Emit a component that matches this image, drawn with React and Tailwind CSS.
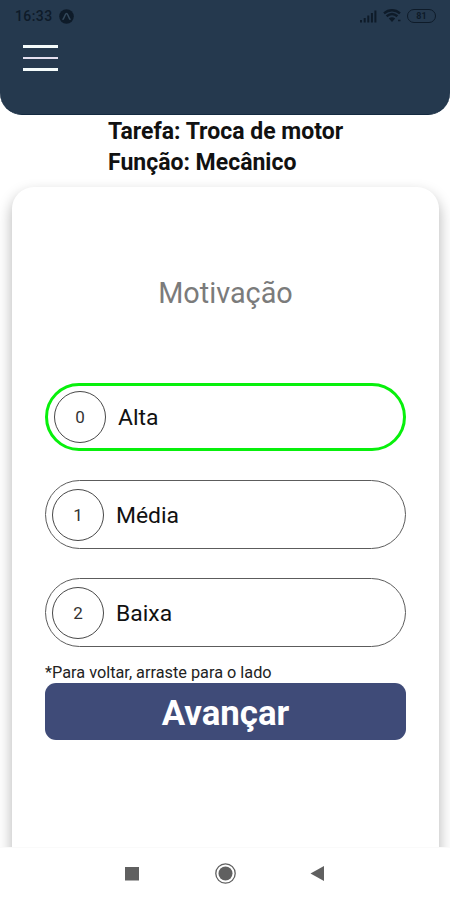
const options = [
  { id: 0, label: "Alta", selected: true },
  { id: 1, label: "Média", selected: false },
  { id: 2, label: "Baixa", selected: false },
];

function StatusBar() {
  return (
    <div className="flex h-8 items-center pl-[15px] pr-[14px] text-[#0e1b29]">
      <span className="w-[38px] whitespace-nowrap text-[14px] leading-4 font-medium tracking-[0.4px]">16:33</span>
      <svg className="ml-[6px]" width="15" height="15" viewBox="0 0 15 15">
        <circle cx="7.5" cy="7.5" r="7.3" fill="#0e1b29" />
        <path d="M4 10.2C5.6 8.5 6 4.6 7.5 4.6S9.4 8.5 11 10.2" fill="none" stroke="#34495c" strokeWidth="1.5" strokeLinecap="round" />
      </svg>
      <svg className="ml-auto" width="17" height="13" viewBox="0 0 17 13" fill="#0e1b29">
        <rect x="0" y="10" width="2" height="2.5" />
        <rect x="3.7" y="8" width="2" height="4.5" />
        <rect x="7.3" y="5.5" width="2" height="7" />
        <rect x="10.9" y="3" width="2" height="9.5" />
        <rect x="14.4" y="0.5" width="2" height="12" />
      </svg>
      <svg className="ml-[6px]" width="19" height="14" viewBox="0 0 19 14" fill="none" stroke="#0e1b29" strokeWidth="2.4">
        <path d="M1 4.4C5.8 0.2 12.2 0.2 17 4.4" />
        <path d="M3.6 7.2C7 4.4 11 4.4 14.4 7.2" />
        <path d="M5.8 9.4L9 13l3.2-3.6C10.2 8 7.8 8 5.8 9.4Z" fill="#0e1b29" stroke="none" />
        <path d="M15 11.5h2.5" strokeWidth="1.5" />
      </svg>
      <span className="ml-[5px] flex h-[14px] w-[29px] items-center justify-center rounded-full border-[1.5px] border-[#0e1b29] text-[9px] leading-none font-bold">
        81
      </span>
    </div>
  );
}

function Option({ id, label, selected }) {
  return (
    <button
      className={
        selected
          ? "flex h-[68px] w-full items-center rounded-full border-[3px] border-[#08f00c] pl-[6px] text-left"
          : "flex h-[69px] w-full items-center rounded-full border border-[#5c5c5c] pt-px pl-[6px] text-left"
      }
    >
      <span className="flex size-[52px] shrink-0 items-center justify-center rounded-full border border-[#484848] pt-px text-[17px] text-[#333]">
        {id}
      </span>
      <span className="ml-[12px] pt-[2px] text-[22.9px] leading-7 text-[#111]">{label}</span>
    </button>
  );
}

export default function App() {
  return (
    <div className="flex h-[900px] w-[450px] flex-col overflow-hidden bg-white font-[Roboto,sans-serif]">
      <header className="h-[115px] shrink-0 rounded-b-[22px] border-b border-[#142a40] bg-[#25394e]">
        <StatusBar />
        <div className="ml-[23px] mt-[13px] flex w-[35px] flex-col gap-[9px]">
          <span className="h-[3px] bg-[#f4fbfb]" />
          <span className="h-[2px] bg-[#e4dfef]" />
          <span className="h-[3px] bg-[#f4fbfb]" />
        </div>
      </header>

      <main className="flex min-h-0 flex-1 flex-col overflow-hidden">
        <div className="pl-[108px] pt-px text-[23px] leading-[31px] font-bold text-[#111]">
          <p>Tarefa: Troca de motor</p>
          <p>Função: Mecânico</p>
        </div>
        <section className="ml-[12px] mr-[11px] mt-[9px] h-[720px] shrink-0 rounded-[22px] bg-white px-[33px] shadow-[0_7px_14px_1px_rgba(0,0,0,0.27)]">
          <h1 className="pt-[88px] text-center text-[28.8px] leading-9 text-[#7b7b7b]">Motivação</h1>
          <div className="mt-[72px] flex flex-col gap-[29px]">
            {options.map((option) => (
              <Option key={option.id} {...option} />
            ))}
          </div>
          <p className="mt-[16px] text-[16.3px] leading-5 text-[#222]">*Para voltar, arraste para o lado</p>
          <button className="flex h-[57px] w-full items-center justify-center rounded-[11px] bg-[#3f4b78] pt-[3px] text-[34.8px] font-bold text-white">
            Avançar
          </button>
        </section>
      </main>

      <nav className="h-[53px] shrink-0 border-t border-[#fafafa] bg-white">
        <svg width="450" height="52" viewBox="0 0 450 52" fill="#606060">
          <rect x="125" y="19" width="14" height="13.5" />
          <circle cx="225.5" cy="25.5" r="9.7" fill="none" stroke="#606060" strokeWidth="1.3" />
          <circle cx="225.5" cy="25.5" r="7" />
          <path d="M310.5 25.5L324 18V33Z" />
        </svg>
      </nav>
    </div>
  );
}
